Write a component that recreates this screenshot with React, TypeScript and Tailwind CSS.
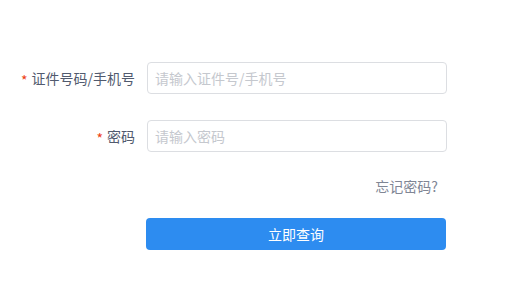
import React from 'react'

const font = { fontFamily: '"Noto Sans CJK SC", "Noto Sans", sans-serif' }

function Field({ label, placeholder, type = 'text' }: { label: string; placeholder: string; type?: string }) {
  return (
    <div className="flex items-center h-8">
      <label className="w-[147px] pr-[12px] flex justify-end items-center text-[14px] text-[#515a6e] shrink-0">
        <span className="text-[#ed4014] mr-[4px] text-[14px] leading-none translate-y-[2px]">*</span>
        {label}
      </label>
      <input
        type={type}
        placeholder={placeholder}
        className="w-[300px] h-8 border border-[#dcdee2] rounded-[4px] px-[7px] text-[14px] text-[#515a6e] placeholder:text-[#c5c8ce] outline-none bg-white"
      />
    </div>
  )
}

export default function App() {
  return (
    <div className="w-[517px] h-[292px] bg-white pt-[62px]" style={font}>
      <div className="flex flex-col">
        <Field label="证件号码/手机号" placeholder="请输入证件号/手机号" />
        <div className="h-[26px]" />
        <Field label="密码" placeholder="请输入密码" type="password" />
        <div className="w-[447px] flex justify-end pr-[9px] mt-[24px] h-5 items-center">
          <a className="text-[14px] text-[#808695] cursor-pointer">忘记密码?</a>
        </div>
        <div className="pl-[146px] mt-[22px]">
          <button className="w-[300px] h-8 rounded-[4px] bg-[#2d8cf0] text-white text-[14px]">立即查询</button>
        </div>
      </div>
    </div>
  )
}
